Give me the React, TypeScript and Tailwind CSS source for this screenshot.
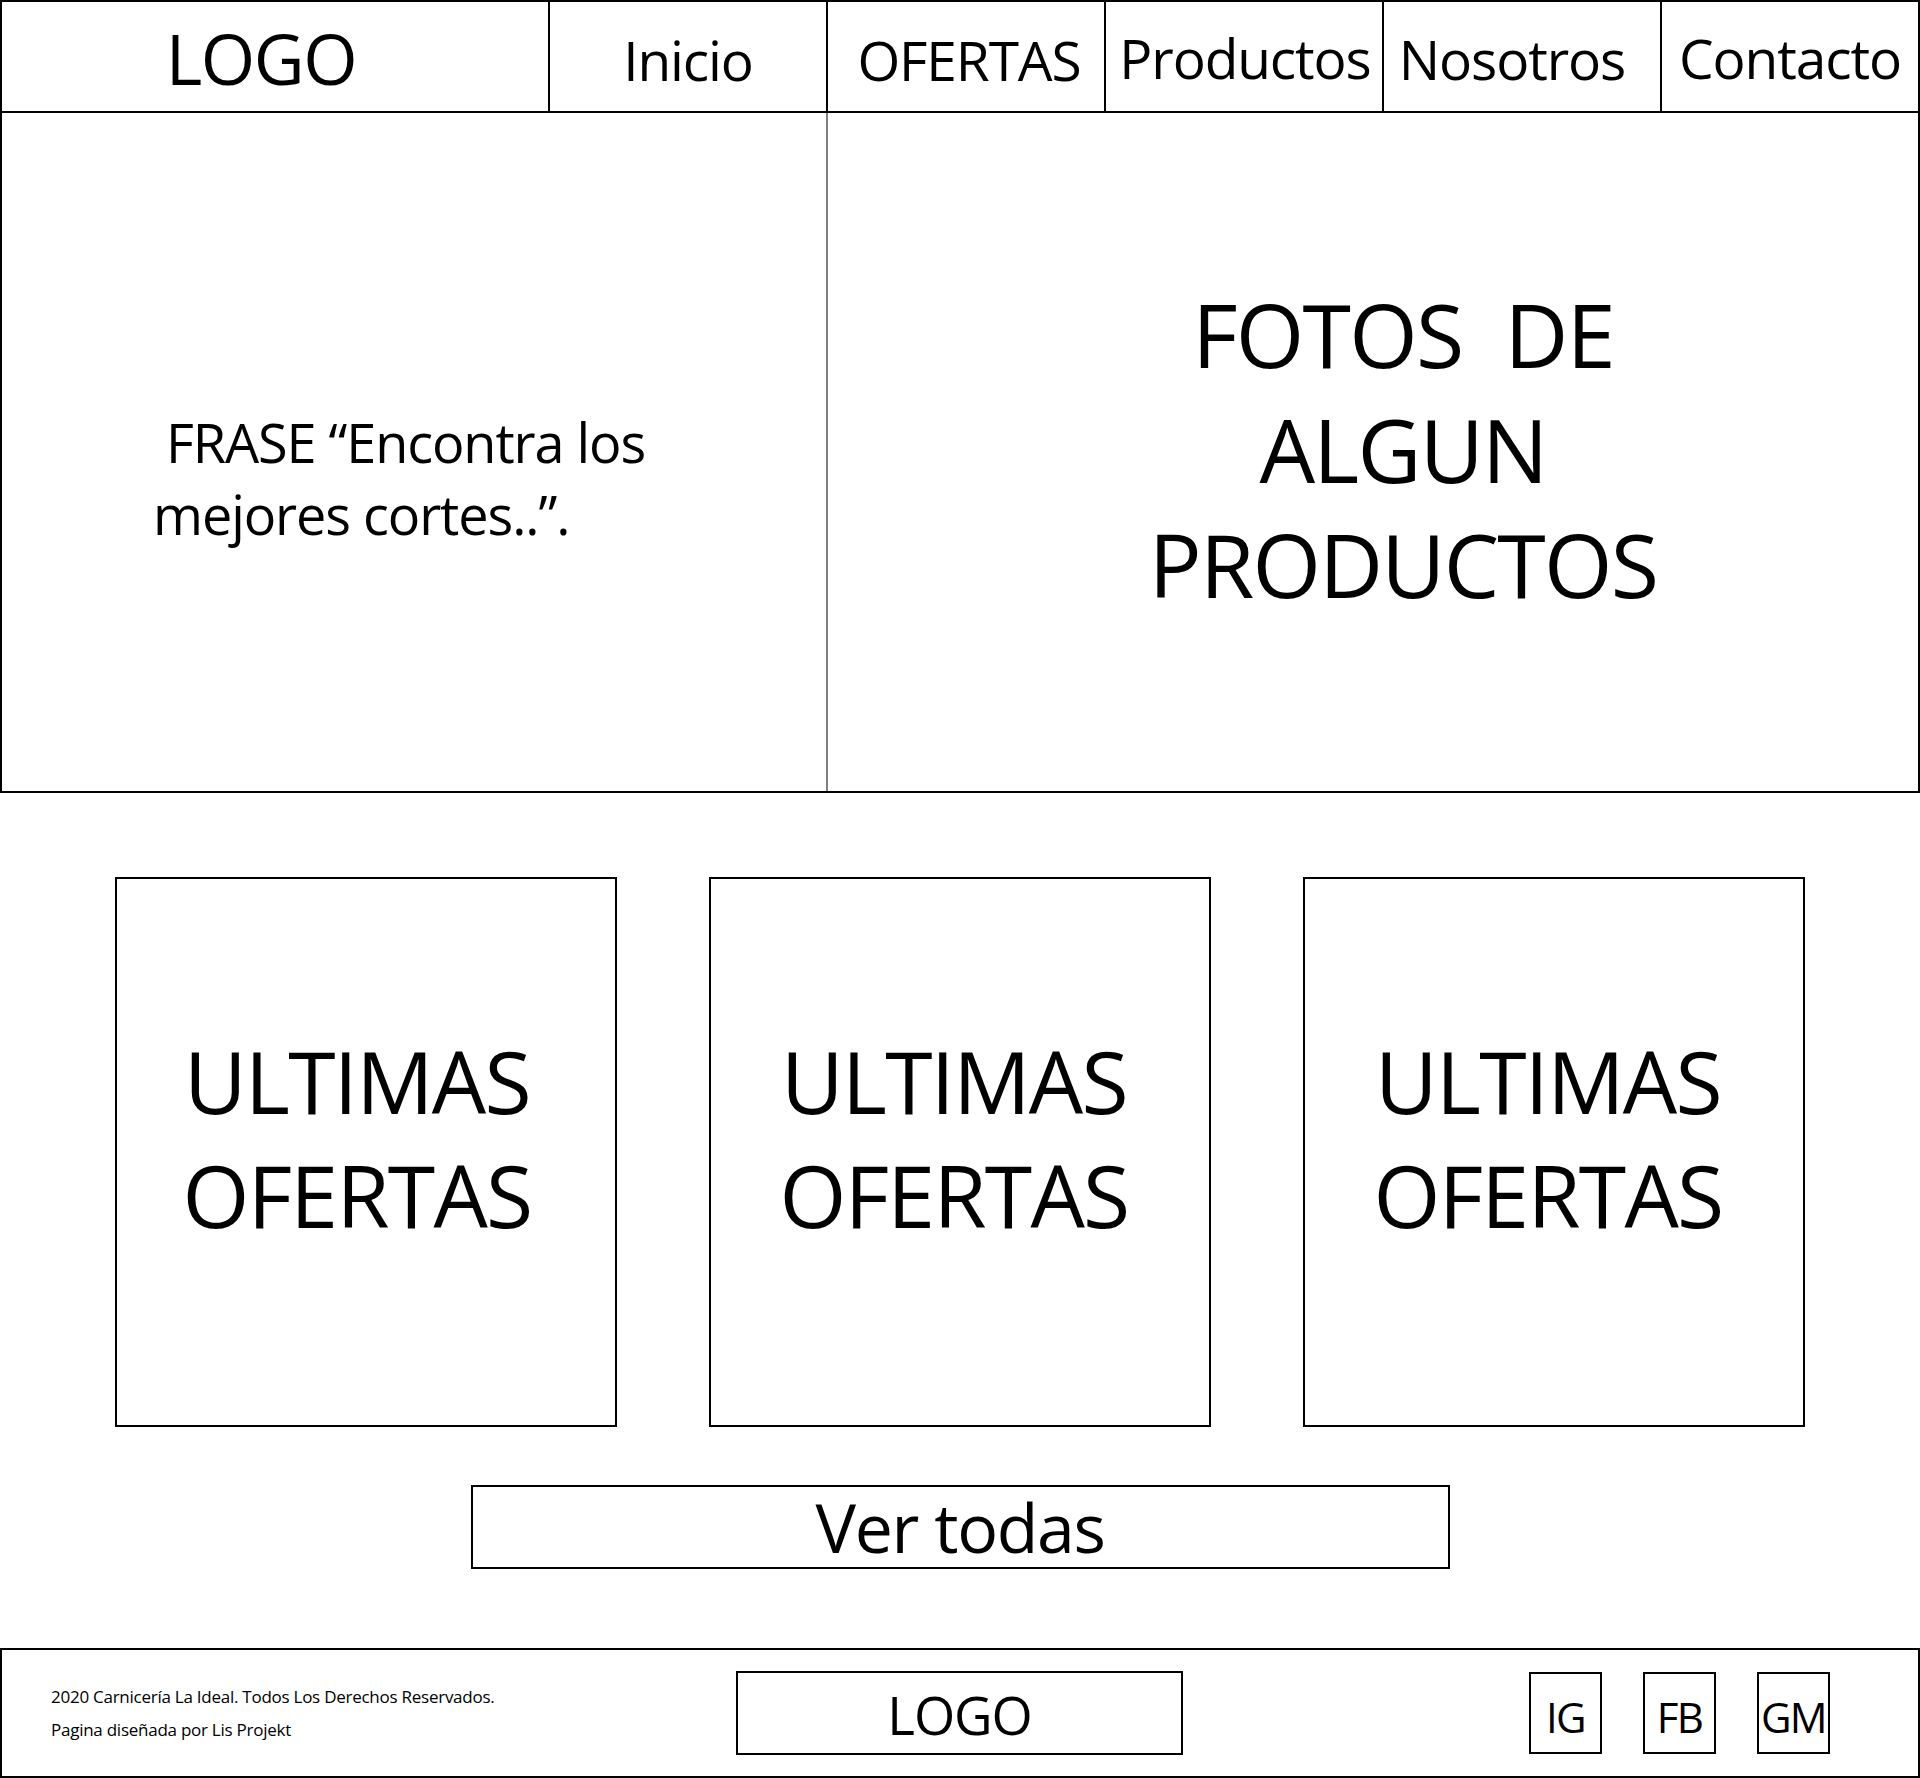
const navItems = [
  { label: 'Inicio', cls: 'pl-0' },
  { label: 'OFERTAS', cls: 'pl-[6px]' },
  { label: 'Productos', cls: 'pl-[2px] pb-[4px]' },
  { label: 'Nosotros', cls: 'pr-[20px] pb-[2px]' },
];

const socials = ['IG', 'FB', 'GM'];

function OfferCard({ shift }: { shift: string }) {
  return (
    <div className={`w-[502px] h-[550px] border-2 border-black flex items-center justify-center pb-[28px] ${shift}`}>
      <p className="text-[86px] leading-[114px] tracking-[-0.02em] text-center">
        ULTIMAS
        <br />
        OFERTAS
      </p>
    </div>
  );
}

export default function App() {
  return (
    <div className="w-[1920px] min-h-[1778px] bg-white text-black font-['Open_Sans',sans-serif]">
      {/* header */}
      <header className="flex h-[113px] border-2 border-black">
        <div className="w-[546px] flex items-center justify-center pr-[28px] pt-[3px]">
          <span className="text-[70px] tracking-[-0.02em] leading-none">LOGO</span>
        </div>
        {navItems.map(item => (
          <div
            key={item.label}
            className="w-[278px] border-l-2 border-black flex items-center justify-center pt-[6px]"
          >
            <span className={`text-[55px] tracking-[-0.02em] leading-none ${item.cls}`}>{item.label}</span>
          </div>
        ))}
        <div className="flex-1 border-l-2 border-black flex items-center justify-center pt-[2px]">
          <span className="text-[55px] tracking-[-0.02em] leading-none">Contacto</span>
        </div>
      </header>

      {/* hero */}
      <section className="flex h-[680px] border-2 border-t-0 border-black">
        <div className="w-[824px] pl-[151px] pt-[293px]">
          <p className="text-[54px] leading-[72px] tracking-[-0.02em]">
            {'\u00a0'}FRASE “Encontra los
            <br />
            mejores cortes..”.
          </p>
        </div>
        <div className="flex-1 border-l-2 border-[#808080] flex items-center justify-center pl-[60px] pb-[6px]">
          <p className="text-[88px] leading-[115px] tracking-[-0.02em] text-center whitespace-pre">
            {'FOTOS  DE'}
            <br />
            ALGUN
            <br />
            PRODUCTOS
          </p>
        </div>
      </section>

      {/* offers */}
      <section className="pt-[84px] flex flex-col items-center">
        <div className="flex gap-[92px]">
          <OfferCard shift="pr-[18px]" />
          <OfferCard shift="pr-[12px]" />
          <OfferCard shift="pr-[12px]" />
        </div>
        <button className="mt-[58px] w-[979px] h-[84px] border-2 border-black flex items-center justify-center">
          <span className="text-[68px] tracking-[-0.02em] leading-none">Ver todas</span>
        </button>
      </section>

      {/* footer */}
      <footer className="mt-[79px] h-[130px] border-2 border-black flex items-center">
        <div className="w-[734px] pl-[49px] text-[17px] leading-[33px] tracking-[-0.015em]">
          <p>2020 Carnicería La Ideal. Todos Los Derechos Reservados.</p>
          <p>Pagina diseñada por Lis Projekt</p>
        </div>
        <div className="w-[447px] h-[84px] border-2 border-black flex items-center justify-center pt-[2px]">
          <span className="text-[53px] tracking-[-0.02em] leading-none">LOGO</span>
        </div>
        <div className="ml-auto mr-[88px] flex gap-[41px]">
          {socials.map(s => (
            <div key={s} className="w-[73px] h-[82px] border-2 border-black flex items-center justify-center pt-[8px]">
              <span className="text-[42px] tracking-[-0.04em] leading-none">{s}</span>
            </div>
          ))}
        </div>
      </footer>
    </div>
  );
}
